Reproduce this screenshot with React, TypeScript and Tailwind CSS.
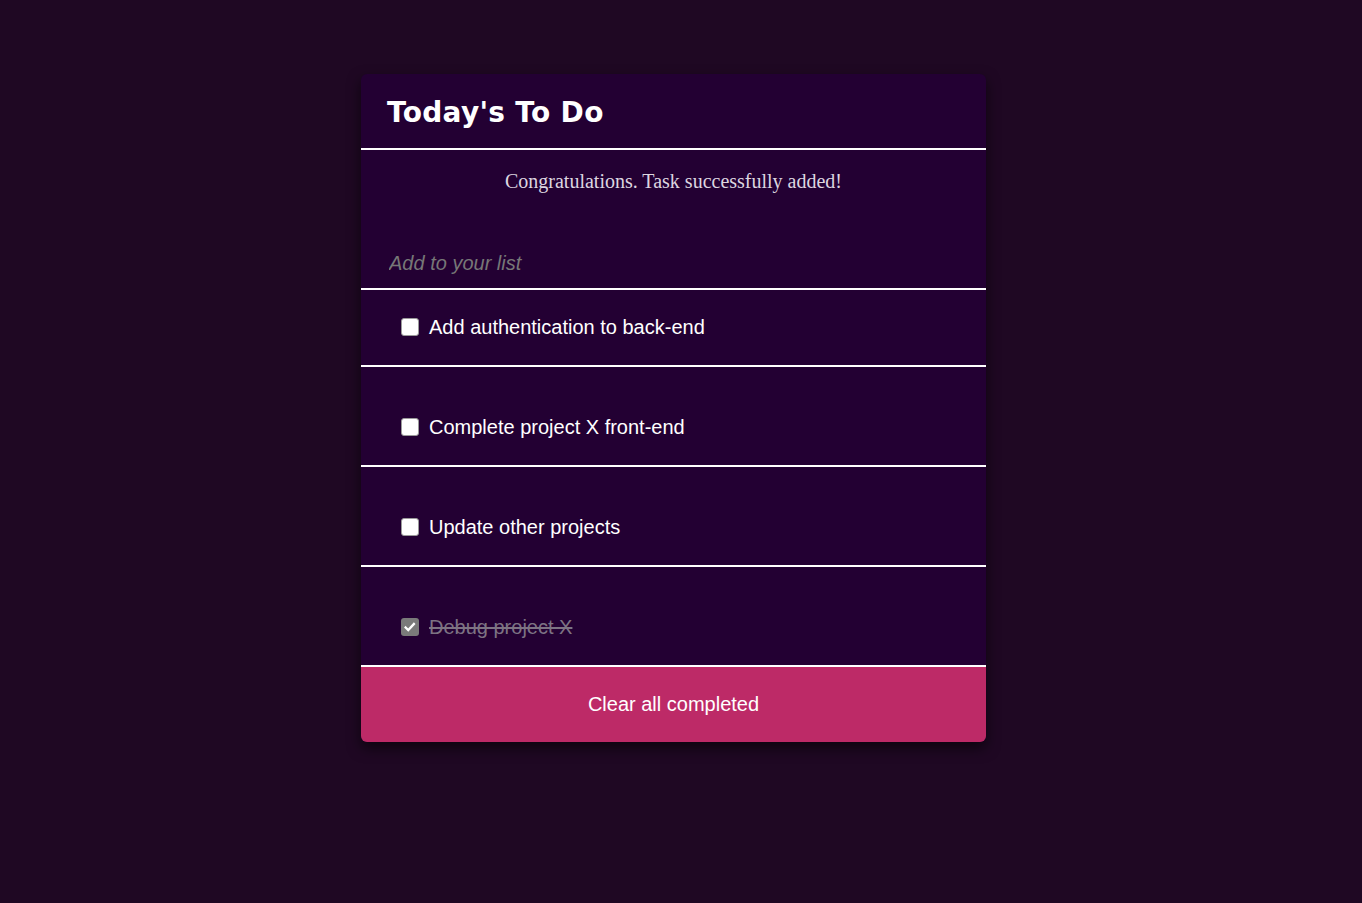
import { useState } from "react";

interface Task {
  id: number;
  text: string;
  done: boolean;
}

const initialTasks: Task[] = [
  { id: 1, text: "Add authentication to back-end", done: false },
  { id: 2, text: "Complete project X front-end", done: false },
  { id: 3, text: "Update other projects", done: false },
  { id: 4, text: "Debug project X", done: true },
];

function Check({ checked }: { checked: boolean }) {
  return checked ? (
    <span className="flex h-[18px] w-[18px] shrink-0 items-center justify-center rounded-[3px] bg-[#7a7a7a]">
      <svg viewBox="0 0 16 16" className="h-[14px] w-[14px]" fill="none" stroke="white" strokeWidth="2.6" strokeLinecap="square">
        <path d="M3 8.5l3 3 6.5-7" />
      </svg>
    </span>
  ) : (
    <span className="h-[18px] w-[18px] shrink-0 rounded-[3px] border border-[#9a9a9a] bg-white" />
  );
}

export default function App() {
  const [tasks, setTasks] = useState(initialTasks);

  const toggle = (id: number) =>
    setTasks((ts) => ts.map((t) => (t.id === id ? { ...t, done: !t.done } : t)));

  return (
    <div className="min-h-[903px] bg-[#1f0823] pt-[74px] pr-[15px] font-['Liberation_Sans',Arial,sans-serif]">
      <div className="mx-auto w-[625px] overflow-hidden rounded-[6px] bg-[#230033] shadow-[0_6px_14px_rgba(0,0,0,0.6)]">
        {/* Header */}
        <div className="flex h-[76px] items-center border-b-2 border-white px-[26px] pt-[4px]">
          <h1 className="font-['Comic_Sans_MS','DejaVu_Sans',sans-serif] text-[28px] font-bold tracking-[0.3px] text-white">
            Today's To Do
          </h1>
        </div>

        {/* Message + input */}
        <p className="pt-[16px] text-center font-['Liberation_Serif','Times_New_Roman',serif] text-[20px] text-[#ddd6e0]">
          Congratulations. Task successfully added!
        </p>
        <div className="border-b-2 border-white px-[28px] pt-[52px] pb-[10px]">
          <input
            className="w-full bg-transparent text-[20px] italic text-white outline-none placeholder:text-[#777777]"
            placeholder="Add to your list"
          />
        </div>

        {/* Tasks */}
        <ul>
          {tasks.map((t, i) => (
            <li
              key={t.id}
              onClick={() => toggle(t.id)}
              className={`flex cursor-pointer items-center gap-[10px] border-b-2 border-white px-[40px] ${
                i === 0 ? "h-[77px] pb-[2px]" : "h-[100px] pt-[22px]"
              }`}
            >
              <Check checked={t.done} />
              <span className={`text-[20px] ${t.done ? "text-[#7d7383] line-through" : "text-white"}`}>
                {t.text}
              </span>
            </li>
          ))}
        </ul>

        <button className="flex h-[75px] w-full items-center justify-center bg-[#bd2a67] pb-[2px] text-[20px] text-white">
          Clear all completed
        </button>
      </div>
    </div>
  );
}
